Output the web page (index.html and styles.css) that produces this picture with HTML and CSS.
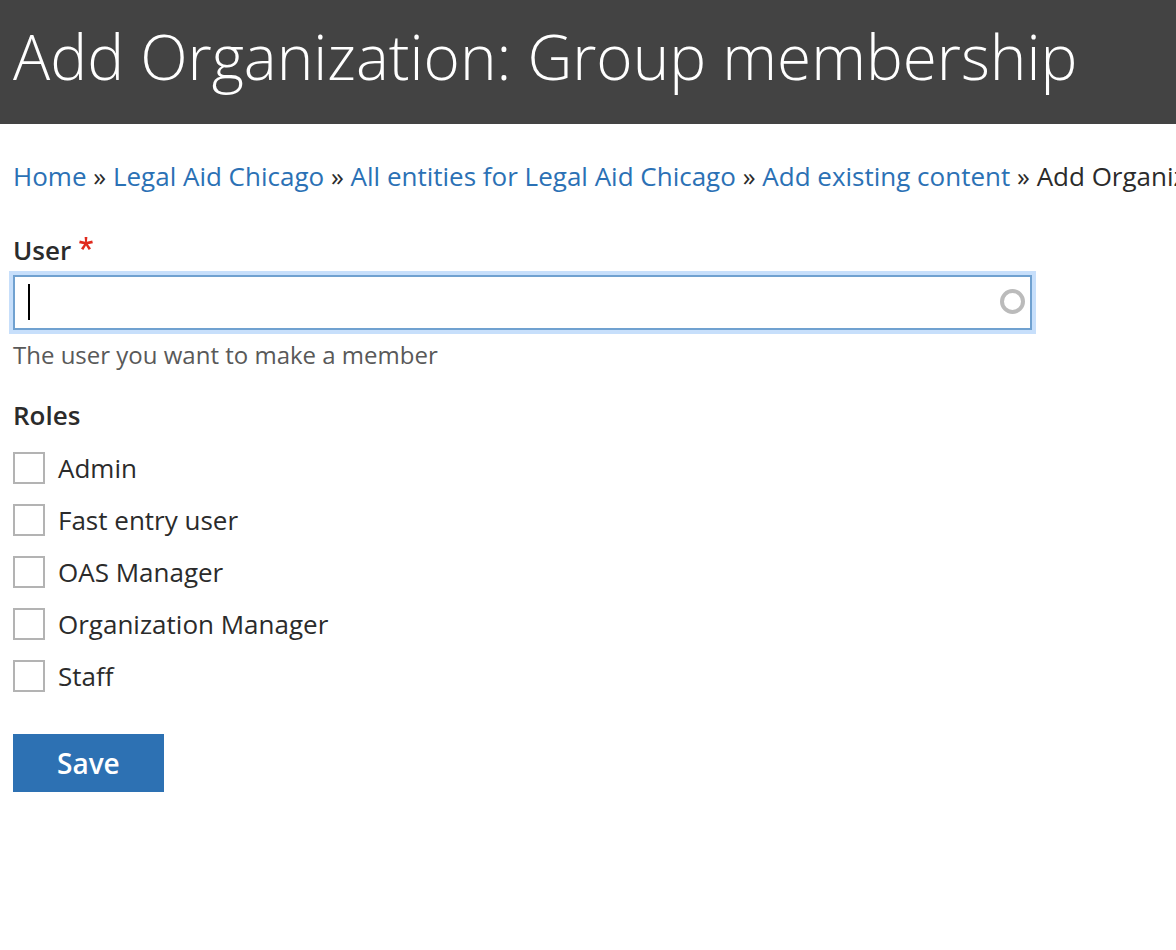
FILE: index.html
```html
<!DOCTYPE html>
<html lang="en">
<head>
    <meta charset="UTF-8">
    <meta name="viewport" content="width=device-width, initial-scale=1.0">
    <title>Add Organization: Group membership</title>
    <link rel="stylesheet" href="styles.css">
</head>
<body>
    <header class="page-header">
        <h1>Add Organization: Group membership</h1>
    </header>

    <main class="content">
        <nav class="breadcrumb" aria-label="Breadcrumb">
            <a href="#">Home</a> »
            <a href="#">Legal Aid Chicago</a> »
            <a href="#">All entities for Legal Aid Chicago</a> »
            <a href="#">Add existing content</a> »
            <span>Add Organization: Group membership</span>
        </nav>

        <form>
            <div class="form-item">
                <label class="form-label" for="user">User
                    <svg class="required" viewBox="0 0 14 14" aria-hidden="true">
                        <path d="M5.6 0H8.4L7.9 4.8L13.2 3.6L13.9 6.2L8.9 7.2L12 11.6L9.7 13L7 8.6L4.3 13L2 11.6L5.1 7.2L0.1 6.2L0.8 3.6L6.1 4.8Z"/>
                    </svg>
                </label>
                <div class="autocomplete">
                    <input type="text" id="user" class="form-text" autocomplete="off" required autofocus>
                    <span class="caret"></span>
                    <span class="throbber"></span>
                </div>
                <p class="description">The user you want to make a member</p>
            </div>

            <fieldset class="roles">
                <legend class="form-label">Roles</legend>
                <div class="role"><input type="checkbox" id="role-admin"><label for="role-admin">Admin</label></div>
                <div class="role"><input type="checkbox" id="role-fast"><label for="role-fast">Fast entry user</label></div>
                <div class="role"><input type="checkbox" id="role-oas"><label for="role-oas">OAS Manager</label></div>
                <div class="role"><input type="checkbox" id="role-org"><label for="role-org">Organization Manager</label></div>
                <div class="role"><input type="checkbox" id="role-staff"><label for="role-staff">Staff</label></div>
            </fieldset>

            <button type="submit" class="btn-save">Save</button>
        </form>
    </main>
</body>
</html>
```
FILE: styles.css
```css
* {
    box-sizing: border-box;
}
body {
    margin: 0;
    font-family: "Open Sans", sans-serif;
    font-size: 26px;
    line-height: 36px;
    color: #2b2b2b;
    background: #fff;
}
.page-header {
    padding: 16px 13px 28px;
    background: #434343;
}
.page-header h1 {
    margin: 0;
    font-size: 62px;
    font-weight: 300;
    line-height: 80px;
    color: #fff;
}
.content {
    padding: 34px 13px;
}
.breadcrumb {
    margin: 0 -13px 38px 0;
    white-space: nowrap;
    overflow: hidden;
}
.breadcrumb a {
    color: #2b71b5;
    text-decoration: none;
}
.breadcrumb a:hover {
    text-decoration: underline;
}
.form-label {
    display: block;
    padding: 0;
    font-weight: 600;
}
.required {
    width: 14px;
    height: 14px;
    margin-left: 1px;
    vertical-align: 9px;
    fill: #e02a1d;
}
.autocomplete {
    position: relative;
    margin-top: 7px;
    margin-right: 131px;
}
.form-text {
    display: block;
    width: 100%;
    height: 55px;
    padding: 8px 40px 8px 14px;
    border: 2px solid #70a1d0;
    outline: 4px solid #c7dffb;
    font: inherit;
    color: inherit;
    caret-color: transparent;
}
.caret {
    display: none;
    position: absolute;
    top: 9px;
    left: 15px;
    width: 2px;
    height: 36px;
    background: #000;
}
.form-text:invalid + .caret {
    display: block;
}
.throbber {
    position: absolute;
    top: 14px;
    right: 7px;
    width: 25px;
    height: 25px;
    border: 4px solid #bbb;
    border-radius: 50%;
}
.description {
    margin: 7px 0 24px;
    font-size: 24px;
    color: #595959;
}
.roles {
    margin: 0 0 40px;
    padding: 0;
    border: 0;
}
.roles .form-label {
    margin-bottom: 17px;
}
.role {
    display: flex;
    align-items: center;
    gap: 13px;
    margin-bottom: 16px;
}
.role:last-child {
    margin-bottom: 0;
}
.role input {
    appearance: none;
    width: 32px;
    height: 32px;
    margin: 0;
    border: 2px solid #b3b3b3;
    background: #fff;
}
.role input:checked {
    background: #2b71b5;
}
.btn-save {
    display: block;
    height: 58px;
    padding: 0 44px;
    border: 0;
    font: inherit;
    font-size: 28px;
    font-weight: 600;
    color: #fff;
    background: #2d71b3;
    cursor: pointer;
}
```
